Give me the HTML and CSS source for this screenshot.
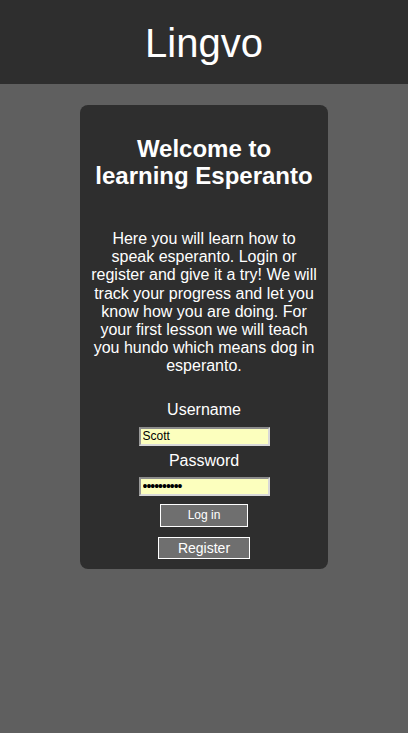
FILE: index.html
```html
<!DOCTYPE html>
<html lang="en">
<head>
<meta charset="utf-8">
<title>Lingvo</title>
<link rel="stylesheet" href="styles.css">
</head>
<body>
<header class="topbar">
  <h1 class="brand">Lingvo</h1>
</header>
<main class="page">
  <section class="card">
    <h2 class="card-title">Welcome to learning Esperanto</h2>
    <p class="intro">Here you will learn how to speak esperanto. Login or register and give it a try! We will track your progress and let you know how you are doing. For your first lesson we will teach you hundo which means dog in esperanto.</p>
    <form class="login">
      <label class="field-label label-user" for="user">Username</label>
      <input class="field field-user" id="user" type="text" value="Scott">
      <label class="field-label label-pass" for="pass">Password</label>
      <input class="field field-pass" id="pass" type="password" value="abcdefghij">
      <button class="btn btn-login" type="button">Log in</button>
      <button class="btn btn-register" type="button">Register</button>
    </form>
  </section>
</main>
</body>
</html>
```

FILE: styles.css
```css
* { box-sizing: border-box; }

html, body {
  margin: 0;
  padding: 0;
}

body {
  background: #5f5f5f;
  font-family: "Liberation Sans", Arial, sans-serif;
  color: #ffffff;
  min-height: 733px;
}

.topbar {
  height: 84px;
  background: #2e2e2e;
  display: flex;
  align-items: center;
  justify-content: center;
  padding-top: 1px;
}

.brand {
  margin: 0;
  font-size: 40px;
  font-weight: normal;
  line-height: 46px;
  color: #ffffff;
}

.page {
  display: flex;
  justify-content: center;
  padding-top: 21px;
}

.card {
  width: 248px;
  background: #2e2e2e;
  border-radius: 8px;
  padding: 10px 10px 10px;
  text-align: center;
}

.card-title {
  margin: 20px 0 0;
  font-size: 24px;
  font-weight: bold;
  line-height: 27px;
}

.intro {
  margin: 41px 0 0;
  font-size: 16px;
  line-height: 18.2px;
}

.login {
  display: flex;
  flex-direction: column;
  align-items: center;
}

.field-label {
  display: block;
  font-size: 16px;
  line-height: 18px;
}

.label-user { margin-top: 25px; }
.label-pass { margin-top: 6px; }

.field {
  display: block;
  width: 131px;
  height: 19px;
  margin: 8px 0 0;
  padding: 0 2px;
  background: #fcffbe;
  border-style: solid;
  border-width: 2px;
  border-color: #8c8c8c #d8d8d8 #d8d8d8 #9a9a9a;
  font-family: "Liberation Sans", Arial, sans-serif;
  font-size: 12px;
  color: #000000;
  outline: none;
}

.field-pass {
  margin-top: 7px;
  font-size: 14px;
  letter-spacing: -1px;
}

.btn {
  display: block;
  background: #6f6f6f;
  border: 1px solid #ffffff;
  color: #ffffff;
  font-family: "Liberation Sans", Arial, sans-serif;
  padding: 0;
  border-radius: 0;
}

.btn-login {
  width: 88px;
  height: 23px;
  margin-top: 8px;
  font-size: 12px;
}

.btn-register {
  width: 92px;
  height: 22px;
  margin-top: 10px;
  font-size: 14px;
}
```
